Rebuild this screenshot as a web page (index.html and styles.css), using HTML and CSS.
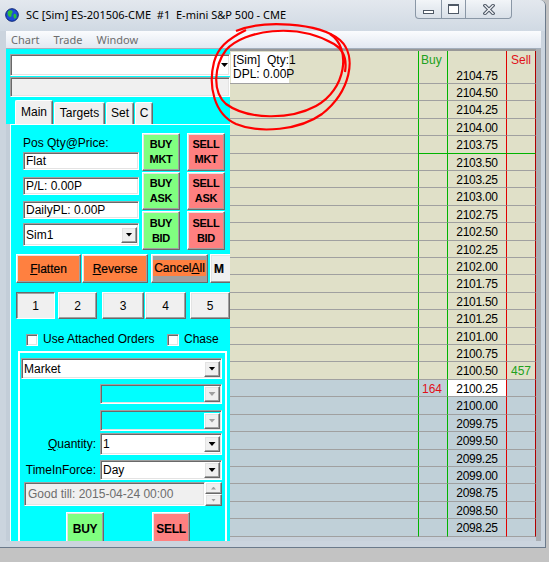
FILE: index.html
```html
<!DOCTYPE html>
<html lang="en">
<head>
    <meta charset="UTF-8">
    <title>SC [Sim] ES-201506-CME #1 E-mini S&amp;P 500 - CME</title>
    <link rel="stylesheet" href="styles.css">
</head>
<body>
<div class="window">
    <div class="titlebar">
        <svg class="app-icon" width="14" height="14" viewBox="0 0 14 14">
            <circle cx="7" cy="7" r="6.3" fill="#1f4fd8" stroke="#0b2370" stroke-width="1"/>
            <path d="M3 3.2 C4.5 1.8 7 1.8 7.6 3.4 C8 5 6 5.4 6.5 7 C7 8.6 5 9.6 4 8.6 C3 7.6 2 5 3 3.2 Z" fill="#2fc03a"/>
            <path d="M9 6 C10.5 5.4 12 7 11.5 9 C11 10.5 9.6 11.5 9 10 C8.5 8.5 8 6.5 9 6 Z" fill="#2fc03a"/>
        </svg>
        <span class="title">SC [Sim] ES-201506-CME  #1  E-mini S&amp;P 500 - CME</span>
        <div class="caption">
            <div class="cap-btn cap-min"><span class="glyph-min"></span></div>
            <div class="cap-btn cap-max"><span class="glyph-max"></span></div>
            <div class="cap-btn cap-close">
                <svg width="12" height="11" viewBox="0 0 12 11">
                    <path d="M2 1.5 L10 9.5 M10 1.5 L2 9.5" stroke="#4f5966" stroke-width="3.4" stroke-linecap="square"/>
                    <path d="M2 1.5 L10 9.5 M10 1.5 L2 9.5" stroke="#f3f5f8" stroke-width="1.3" stroke-linecap="square"/>
                </svg>
            </div>
        </div>
    </div>

    <div class="menubar">
        <span>Chart</span><span>Trade</span><span>Window</span>
    </div>

    <div class="client">
        <!-- trade window (left) -->
        <div class="trade-panel">
            <div class="combo sunken"><i class="tri"></i></div>
            <div class="status-box sunken"></div>

            <div class="tabs">
                <div class="tab active">Main</div>
                <div class="tab tab-targets">Targets</div>
                <div class="tab tab-set">Set</div>
                <div class="tab tab-c">C</div>
            </div>

            <div class="tab-page">
                <div class="pos-row">
                    <div class="pos-fields">
                        <div class="pos-label">Pos Qty@Price:</div>
                        <div class="field sunken f1">Flat</div>
                        <div class="field sunken f2">P/L: 0.00P</div>
                        <div class="field sunken f3">DailyPL: 0.00P</div>
                        <div class="select sunken account">
                            <span class="select-text">Sim1</span>
                            <span class="drop raised"><i class="tri"></i></span>
                        </div>
                    </div>
                    <div class="order-grid">
                        <button class="obtn buy raised">BUY<br>MKT</button>
                        <button class="obtn sell raised">SELL<br>MKT</button>
                        <button class="obtn buy raised">BUY<br>ASK</button>
                        <button class="obtn sell raised">SELL<br>ASK</button>
                        <button class="obtn buy raised">BUY<br>BID</button>
                        <button class="obtn sell raised">SELL<br>BID</button>
                    </div>
                </div>

                <div class="action-row">
                    <button class="abtn orange raised flatten"><u>F</u>latten</button>
                    <button class="abtn orange raised reverse"><u>R</u>everse</button>
                    <button class="abtn grey raised cancel"><span>Cancel<u>A</u>ll</span></button>
                    <button class="abtn light raised mbtn">M</button>
                </div>

                <div class="num-row">
                    <button class="num pressed">1</button>
                    <button class="num raised">2</button>
                    <button class="num raised">3</button>
                    <button class="num raised">4</button>
                    <button class="num raised">5</button>
                </div>

                <div class="check-row">
                    <span class="check sunken"></span><span class="check-label wide">Use Attached Orders</span>
                    <span class="check sunken"></span><span class="check-label">Chase</span>
                </div>

                <div class="group">
                    <div class="select sunken market">
                        <span class="select-text">Market</span>
                        <span class="drop raised"><i class="tri"></i></span>
                    </div>
                    <div class="select sunken disabled dis1">
                        <span class="select-text"></span>
                        <span class="drop raised"><i class="tri"></i></span>
                    </div>
                    <div class="select sunken disabled dis2">
                        <span class="select-text"></span>
                        <span class="drop raised"><i class="tri"></i></span>
                    </div>
                    <div class="form-row qty-row">
                        <span class="form-label"><u>Q</u>uantity:</span>
                        <div class="select sunken">
                            <span class="select-text">1</span>
                            <span class="drop raised"><i class="tri"></i></span>
                        </div>
                    </div>
                    <div class="form-row tif-row">
                        <span class="form-label">TimeInForce:</span>
                        <div class="select sunken">
                            <span class="select-text">Day</span>
                            <span class="drop raised"><i class="tri"></i></span>
                        </div>
                    </div>
                    <div class="till-row">
                        <div class="till sunken">Good till: 2015-04-24 00:00</div>
                        <div class="spin">
                            <span class="raised"><i class="tri-up"></i></span>
                            <span class="raised"><i class="tri-down"></i></span>
                        </div>
                    </div>
                    <div class="bs-row">
                        <button class="obtn buy raised big-buy">BUY</button>
                        <button class="obtn sell raised big-sell">SELL</button>
                    </div>
                </div>
            </div>
        </div>

        <!-- price ladder (right) -->
        <div class="ladder">
            <div class="ladder-head">
                <span class="c"></span><span class="b">Buy</span><span class="p"></span><span class="s">Sell</span>
            </div>
            <div class="rows">
                <div class="row"><span></span><span class="b"></span><span class="p">2104.75</span><span class="s"></span></div>
                <div class="row"><span></span><span class="b"></span><span class="p">2104.50</span><span class="s"></span></div>
                <div class="row"><span></span><span class="b"></span><span class="p">2104.25</span><span class="s"></span></div>
                <div class="row"><span></span><span class="b"></span><span class="p">2104.00</span><span class="s"></span></div>
                <div class="row mark"><span></span><span class="b"></span><span class="p">2103.75</span><span class="s"></span></div>
                <div class="row"><span></span><span class="b"></span><span class="p">2103.50</span><span class="s"></span></div>
                <div class="row"><span></span><span class="b"></span><span class="p">2103.25</span><span class="s"></span></div>
                <div class="row"><span></span><span class="b"></span><span class="p">2103.00</span><span class="s"></span></div>
                <div class="row"><span></span><span class="b"></span><span class="p">2102.75</span><span class="s"></span></div>
                <div class="row"><span></span><span class="b"></span><span class="p">2102.50</span><span class="s"></span></div>
                <div class="row"><span></span><span class="b"></span><span class="p">2102.25</span><span class="s"></span></div>
                <div class="row"><span></span><span class="b"></span><span class="p">2102.00</span><span class="s"></span></div>
                <div class="row"><span></span><span class="b"></span><span class="p">2101.75</span><span class="s"></span></div>
                <div class="row"><span></span><span class="b"></span><span class="p">2101.50</span><span class="s"></span></div>
                <div class="row"><span></span><span class="b"></span><span class="p">2101.25</span><span class="s"></span></div>
                <div class="row"><span></span><span class="b"></span><span class="p">2101.00</span><span class="s"></span></div>
                <div class="row"><span></span><span class="b"></span><span class="p">2100.75</span><span class="s"></span></div>
                <div class="row"><span></span><span class="b"></span><span class="p">2100.50</span><span class="s">457</span></div>
                <div class="row low"><span></span><span class="b">164</span><span class="p last">2100.25</span><span class="s"></span></div>
                <div class="row low"><span></span><span class="b"></span><span class="p">2100.00</span><span class="s"></span></div>
                <div class="row low"><span></span><span class="b"></span><span class="p">2099.75</span><span class="s"></span></div>
                <div class="row low"><span></span><span class="b"></span><span class="p">2099.50</span><span class="s"></span></div>
                <div class="row low"><span></span><span class="b"></span><span class="p">2099.25</span><span class="s"></span></div>
                <div class="row low"><span></span><span class="b"></span><span class="p">2099.00</span><span class="s"></span></div>
                <div class="row low"><span></span><span class="b"></span><span class="p">2098.75</span><span class="s"></span></div>
                <div class="row low"><span></span><span class="b"></span><span class="p">2098.50</span><span class="s"></span></div>
                <div class="row low"><span></span><span class="b"></span><span class="p">2098.25</span><span class="s"></span></div>
            </div>
            <div class="pos-info">[Sim]  Qty:1
DPL: 0.00P</div>
        </div>

        <div class="gutter"></div>
    </div>
</div>

<!-- hand-drawn marker over the position box -->
<svg class="scribble" width="549" height="562" viewBox="0 0 549 562">
    <path d="M236 31 C262 20, 318 22, 340 40 C358 56, 350 92, 322 114 C300 130, 260 134, 236 124 C214 114, 208 86, 214 62 C218 48, 226 40, 246 30" fill="none" stroke="#ff0000" stroke-width="2.2"/>
    <path d="M330 34 C352 48, 346 90, 316 106 C290 120, 248 120, 226 104 C212 92, 214 66, 226 50 C244 30, 296 22, 334 44 C344 50, 347 60, 345 72" fill="none" stroke="#ff0000" stroke-width="2.2"/>
</svg>
</body>
</html>
```

FILE: styles.css
```css
* {
    box-sizing: border-box;
}

body {
    margin: 0;
    position: relative;
    width: 549px;
    height: 562px;
    overflow: hidden;
    background: #c3c3c3;
    font-family: "Liberation Sans", Arial, sans-serif;
    font-size: 12px;
    color: #000;
}

button {
    font: inherit;
    color: inherit;
    margin: 0;
    padding: 0;
    cursor: pointer;
}

/* 3d edges, windows classic */
.sunken {
    border: 1px solid;
    border-color: #a0a0a0 #fff #fff #a0a0a0;
    box-shadow: inset 1px 1px #696969, inset -1px -1px #e3e3e3;
}

.raised {
    border: 1px solid;
    border-color: #fff #696969 #696969 #fff;
    box-shadow: inset -1px -1px #a0a0a0, inset 1px 1px #e3e3e3;
}

.tri {
    display: block;
    width: 7px;
    height: 4px;
    background: #000;
    clip-path: polygon(0 0, 100% 0, 50% 100%);
}

/* ---- window frame ---- */
.window {
    width: 546px;
    height: 548px;
    display: flex;
    flex-direction: column;
    background: #cbd4de;
    border-right: 1px solid #6b7a8b;
    border-bottom: 1px solid #6b7a8b;
    border-top-right-radius: 6px;
    overflow: hidden;
}

.titlebar {
    flex: none;
    height: 31px;
    display: flex;
    align-items: flex-start;
    background: linear-gradient(#e3e8ee, #d0d9e3);
}

.app-icon {
    flex: none;
    margin: 8px 0 0 5px;
}

.title {
    margin: 7px 0 0 7px;
    font-family: "Noto Sans", sans-serif;
    font-size: 11px;
    line-height: 16px;
    white-space: pre;
}

.caption {
    display: flex;
    margin: 0 33px 0 auto;
}

.cap-btn {
    height: 19px;
    display: flex;
    justify-content: center;
    align-items: center;
    background: linear-gradient(#f2f5f8, #d9e0e8);
    border: 1px solid #8a97a6;
    border-top: none;
}

.cap-min {
    width: 27px;
    border-bottom-left-radius: 4px;
    align-items: flex-end;
    padding-bottom: 4px;
}

.cap-max {
    width: 25px;
    margin-left: -1px;
}

.cap-close {
    width: 47px;
    margin-left: -1px;
    border-bottom-right-radius: 4px;
}

.glyph-min {
    width: 11px;
    height: 4px;
    border: 1px solid #4f5966;
    background: #fff;
}

.glyph-max {
    width: 11px;
    height: 10px;
    border: 1px solid #4f5966;
    border-top-width: 2px;
    background: #fff;
}

.menubar {
    flex: none;
    height: 18px;
    margin: 0 4px 0 6px;
    padding-left: 5px;
    display: flex;
    align-items: center;
    background: linear-gradient(#fbfcfe, #e2e8f1);
    border-bottom: 1px solid #a4afbc;
    font-family: "Noto Sans", sans-serif;
    font-size: 11px;
    color: #6d6d6d;
}

.menubar span {
    margin-right: 14px;
}

.client {
    flex: none;
    height: 492px;
    margin: 0 4px 0 6px;
    display: flex;
}

/* ---- trade panel ---- */
.trade-panel {
    flex: none;
    width: 224px;
    display: flex;
    flex-direction: column;
    background: #00ffff;
    overflow: hidden;
}

.combo {
    flex: none;
    width: 220px;
    height: 22px;
    margin: 5px 0 0 4px;
    display: flex;
    justify-content: flex-end;
    align-items: center;
    padding-right: 1px;
    background: #fff;
}

.status-box {
    flex: none;
    width: 220px;
    height: 20px;
    margin: 1px 0 0 4px;
    background: #f0f0f0;
}

.tabs {
    flex: none;
    height: 24px;
    margin: 3px 0 0 9px;
    display: flex;
    align-items: flex-end;
}

.tab {
    height: 22px;
    margin-left: 1px;
    background: #f0f0f0;
    border: 1px solid;
    border-color: #fff #696969 transparent #fff;
    border-bottom: none;
    border-radius: 2px 2px 0 0;
    box-shadow: inset -1px 0 #a0a0a0;
    text-align: center;
    line-height: 20px;
}

.tab.active {
    width: 38px;
    height: 24px;
    margin-left: 0;
    line-height: 22px;
}

.tab-targets { width: 51px; }
.tab-set { width: 28px; }
.tab-c { width: 18px; }

.tab-page {
    flex: 1;
    display: flex;
    flex-direction: column;
    border-left: 4px solid #c3cdd8;
    box-shadow: inset 1px 1px #fff;
}

.pos-row {
    display: flex;
    gap: 3px;
    margin: 9px 0 0 13px;
}

.pos-fields {
    width: 116px;
    display: flex;
    flex-direction: column;
}

.pos-label {
    margin-top: 3px;
    height: 14px;
    line-height: 14px;
}

.field {
    height: 18px;
    padding-left: 2px;
    line-height: 16px;
    background: #fff;
}

.f1 { margin-top: 2px; }
.f2 { margin-top: 7px; }
.f3 { margin-top: 6px; }

.select {
    display: flex;
    align-items: center;
    background: #fff;
    padding: 0 1px 0 2px;
}

.select-text {
    flex: 1;
}

.account {
    margin-top: 4px;
    height: 23px;
}

.drop {
    width: 16px;
    height: 16px;
    display: flex;
    justify-content: center;
    align-items: center;
    background: #f0f0f0;
}

.disabled {
    background: transparent;
}

.disabled .tri {
    background: #a0a0a0;
}

.order-grid {
    display: grid;
    grid-template-columns: 38px 38px;
    grid-template-rows: 38px 38px 39px;
    column-gap: 7px;
    row-gap: 1px;
}

.obtn {
    font-size: 11px;
    font-weight: bold;
    letter-spacing: -0.3px;
    line-height: 15px;
}

.obtn.buy { background: #80ff80; }
.obtn.sell { background: #ff8080; }

.action-row {
    display: flex;
    height: 29px;
    margin: 4px 0 0 6px;
}

.abtn {
    height: 29px;
    flex: none;
    -webkit-text-stroke: 0.2px #000;
}

.abtn.orange { background: #ff8040; }
.abtn.grey { background: #a0a0a0; }
.abtn.light { background: #f0f0f0; }

.flatten { width: 65px; margin-right: 1px; }
.reverse { width: 66px; margin-right: 3px; }
.cancel { width: 57px; margin-right: 2px; }
.cancel span {
    background: #ff8040;
    padding: 1px 1px;
    line-height: 15px;
}

.mbtn {
    width: 22px;
    text-align: left;
    padding-left: 3px;
    font-weight: bold;
}

.num-row {
    display: flex;
    height: 27px;
    margin: 9px 0 0 6px;
}

.num {
    height: 27px;
    flex: none;
    background: #f0f0f0;
}

.num.pressed {
    border: 1px solid;
    border-color: #696969 #fff #fff #696969;
    box-shadow: inset 1px 1px #a0a0a0;
}

.num:nth-child(1) { width: 39px; }
.num:nth-child(2) { width: 39px; margin-left: 3px; }
.num:nth-child(3) { width: 42px; margin-left: 5px; }
.num:nth-child(4) { width: 41px; margin-left: 1px; }
.num:nth-child(5) { width: 40px; margin-left: 4px; }

.check-row {
    display: flex;
    align-items: center;
    height: 13px;
    margin: 14px 0 0 16px;
}

.check {
    flex: none;
    width: 12px;
    height: 12px;
    background: #fff;
}

.check-label {
    margin-left: 5px;
    line-height: 13px;
}

.check-label.wide {
    width: 124px;
}

.group {
    flex: 1;
    width: 209px;
    margin: 5px 0 0 8px;
    display: flex;
    flex-direction: column;
    border: 2px solid #fff;
    border-bottom: none;
}

.market {
    width: 201px;
    height: 21px;
    margin: 5px 0 0 1px;
}

.dis1,
.dis2 {
    width: 122px;
    margin-left: 80px;
}

.dis1 { height: 20px; margin-top: 5px; }
.dis2 { height: 21px; margin-top: 6px; }

.form-row {
    display: flex;
    align-items: center;
}

.form-row .select {
    width: 122px;
    height: 100%;
}

.form-label {
    width: 76px;
    margin-right: 4px;
    text-align: right;
}

.qty-row { height: 22px; margin-top: 2px; }
.tif-row { height: 20px; margin-top: 5px; }

.till-row {
    display: flex;
    margin: 2px 0 0 4px;
}

.till {
    width: 181px;
    height: 24px;
    padding-left: 3px;
    line-height: 22px;
    background: #f0f0f0;
    color: #6d6d6d;
}

.spin {
    width: 17px;
    display: flex;
    flex-direction: column;
}

.spin span {
    height: 12px;
    display: flex;
    justify-content: center;
    align-items: center;
    background: #f0f0f0;
}

.tri-up,
.tri-down {
    display: block;
    width: 5px;
    height: 3px;
    background: #a0a0a0;
}

.tri-up { clip-path: polygon(50% 0, 100% 100%, 0 100%); }
.tri-down { clip-path: polygon(0 0, 100% 0, 50% 100%); }

.bs-row {
    display: flex;
    margin-top: 6px;
}

.bs-row .obtn {
    width: 38px;
    height: 34px;
    font-size: 12px;
}

.big-buy { margin-left: 46px; }
.big-sell { margin-left: 48px; }

/* ---- price ladder ---- */
.ladder {
    flex: none;
    position: relative;
    width: 306px;
    border-top: 2px solid #989898;
    background: #c8d1db;
}

.ladder-head,
.row {
    display: grid;
    grid-template-columns: 188px 29px 59px 30px;
}

.ladder-head {
    height: 15.58px;
    background: #e0e0c8;
}

.ladder-head span {
    padding-top: 2px;
    line-height: 15px;
}

.rows {
    display: grid;
    grid-auto-rows: 17.42px;
}

.row {
    background: #e0e0c8;
}

.row.low {
    background: #c0d0d8;
}

.row span {
    border-bottom: 1px solid #a0a0a0;
    padding-top: 2px;
    line-height: 15px;
    white-space: nowrap;
    overflow: hidden;
}

.b {
    border-left: 1px solid #00b400;
    padding-left: 3px;
    color: #e0101a;
}

.ladder-head .b {
    padding-left: 2px;
    color: #20a020;
}

.p {
    border-left: 1px solid #00b400;
    text-align: center;
    letter-spacing: -0.3px;
}

.p.last {
    background: #fff;
}

.s {
    border-left: 1px solid #e00000;
    border-right: 1px solid #b00000;
    padding-left: 4px;
    color: #20a020;
}

.ladder-head .s {
    color: #e0101a;
}

.row.mark .b,
.row.mark .p,
.row.mark .s {
    border-bottom-color: #00b400;
}

.pos-info {
    position: absolute;
    top: 1px;
    left: 1px;
    width: 58px;
    height: 31px;
    padding: 1px 2px;
    background: #fff;
    line-height: 14px;
    white-space: pre;
}

.gutter {
    flex: none;
    width: 5px;
    background: #a9adb2;
}

.scribble {
    position: absolute;
    left: 0;
    top: 0;
    pointer-events: none;
}
```
